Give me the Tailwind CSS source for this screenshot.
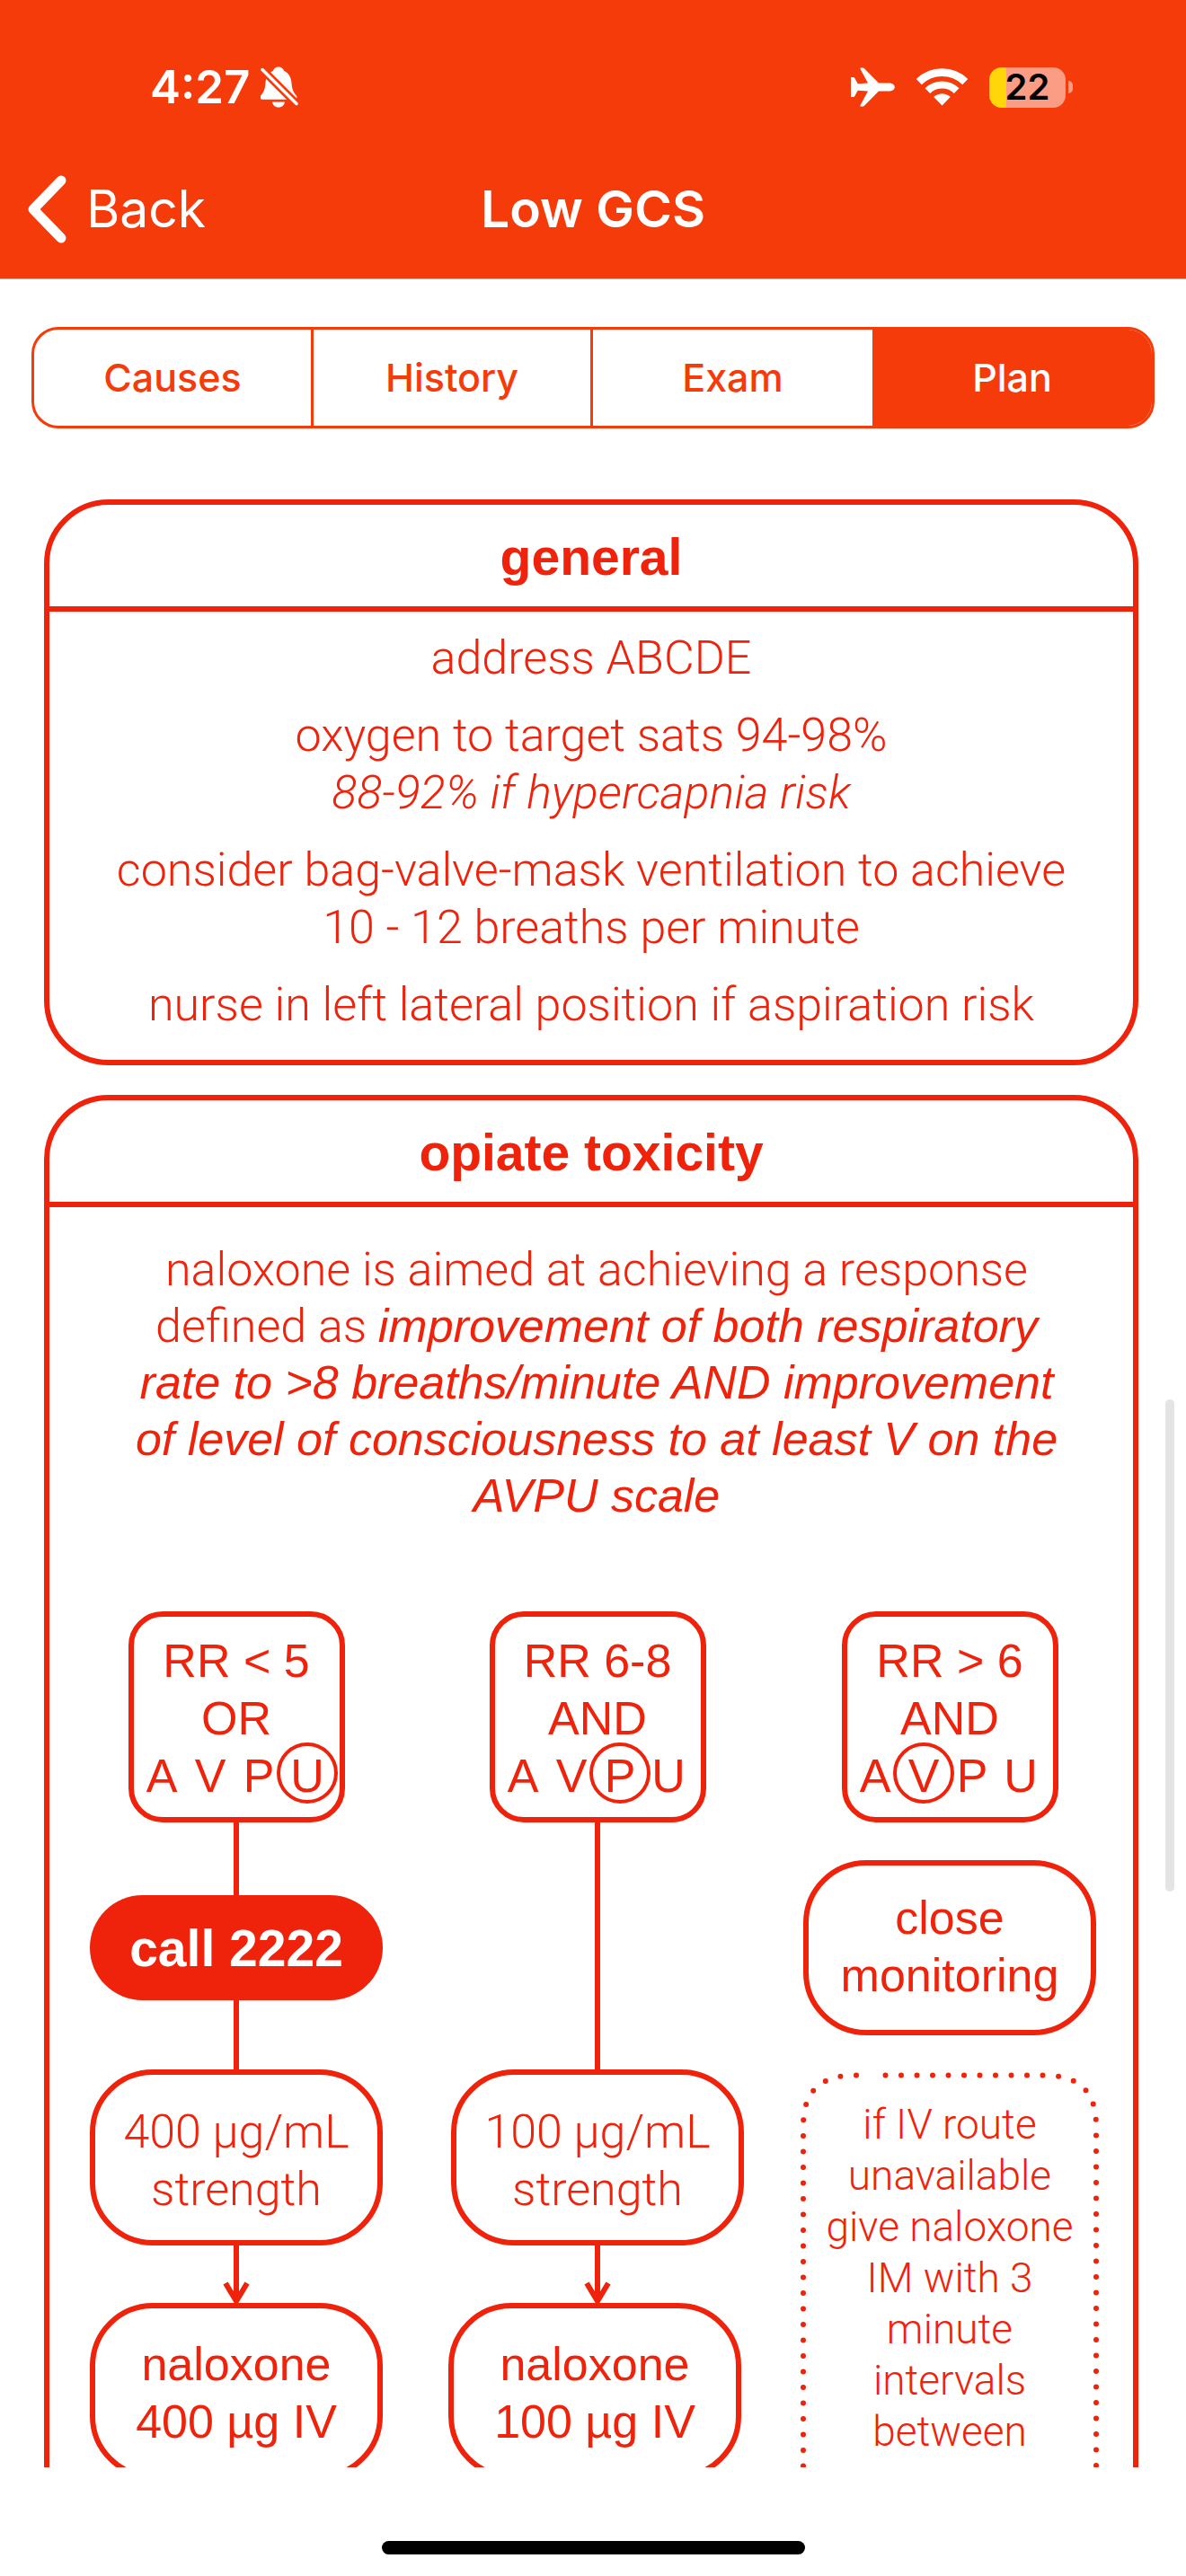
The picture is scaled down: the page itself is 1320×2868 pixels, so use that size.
<!DOCTYPE html>
<html lang="en">
<head>
<meta charset="utf-8">
<meta name="viewport" content="width=device-width, initial-scale=1">
<title>Low GCS</title>
<script src="https://cdn.jsdelivr.net/npm/@tailwindcss/browser@4"></script>
</head>
<body class="flex h-screen flex-col overflow-hidden bg-white font-['Inter',sans-serif]">

  <header class="shrink-0 border-b border-[#c9a9a0] bg-[#f63b0b] text-white">
    <!-- Status bar -->
    <div class="flex items-center justify-between pt-[66px] pb-7 pr-[126px] pl-[167px]">
      <div class="flex h-[62px] items-center gap-3">
        <span class="text-[51px] font-semibold">4:27</span>
        <svg class="h-[46px] w-[42px]" viewBox="0 0 42 46" aria-label="Silent mode">
          <path fill="#fff" d="M20 .5c3 0 5.300 1.800 6 4.200 5 2.200 8 7 8.500 13.800.5 7 2 10 5 13.500 1.800 2.200.8 4.700-1.500 4.700H2c-2.300 0-3.200-2.500-1.500-4.700 3-3.500 4.500-6.500 5-13.500.5-6.800 3.500-11.600 8.500-13.800.7-2.400 3-4.200 6-4.200z"/>
          <path fill="#fff" d="M13 39.500h14c-.5 3.700-3.400 6-7 6s-6.500-2.300-7-6z"/>
          <path stroke="#f63b0b" stroke-width="9" d="M-1 .5 43 44.500"/>
          <path stroke="#fff" stroke-width="3.500" stroke-linecap="round" d="M2 3.500 40 41.500"/>
        </svg>
      </div>
      <div class="flex h-[62px] items-center gap-6">
        <svg class="h-11 w-[49px]" viewBox="0 0 49 44" fill="#fff" aria-label="Airplane mode">
          <path d="M0 11h2.800q1 0 1.500 1l3.400 6.300 11.300-.8L10.500 1.800Q10 .5 11.400.5h1.800q1.200 0 2 1L31 17.500h11.500c4 0 6.300 2.200 6.300 4.500s-2.300 4.500-6.300 4.500H31L15.200 42.500q-.8 1-2 1h-1.800q-1.400 0-.9-1.300L19 26.500l-11.300-.8L4.300 32q-.5 1-1.500 1H0z"/>
        </svg>
        <svg class="h-[42px] w-[57px]" viewBox="0 0 57 42" fill="none" stroke="#fff" aria-label="Wi-Fi">
          <path stroke-width="8.700" d="M2.800 15.100A37 37 0 0 1 54.200 15.100"/>
          <path stroke-width="8" d="M12.400 25.100A23 23 0 0 1 44.600 25.100"/>
          <path fill="#fff" stroke="none" d="M28.500 41.500 19.800 32.600Q19 31.600 20 31 28.500 25.500 37 31 38 31.600 37.200 32.600z"/>
        </svg>
        <div class="flex items-center gap-[3px]" aria-label="Battery 22 percent">
          <div class="flex h-[45px] w-[85px] items-center justify-center rounded-[14px] bg-linear-to-r from-[#ffd60a] from-[19px] to-[#fb9d85] to-[19px]">
            <span class="text-[40px] leading-none font-semibold text-black">22</span>
          </div>
          <div class="h-[14px] w-[5px] rounded-r-full bg-[#fb9d85]"></div>
        </div>
      </div>
    </div>
    <!-- Navigation bar -->
    <div class="grid h-[154px] grid-cols-[1fr_auto_1fr] items-center">
      <button class="flex items-center gap-[22px] justify-self-start pl-[31px] text-[57px]">
        <svg class="h-[76px] w-[43px]" viewBox="0 0 43 76" fill="none" stroke="#fff" stroke-width="11" stroke-linecap="round" stroke-linejoin="round" aria-hidden="true"><path d="M37 6 6 38l31 32"/></svg>
        Back
      </button>
      <h1 class="text-[57px] font-semibold">Low GCS</h1>
    </div>
  </header>

  <main class="relative min-h-0 flex-1 overflow-hidden pt-[53px] text-[#ef230c]">
    <div class="px-[35px]">
      <div role="tablist" class="grid h-[113px] grid-cols-4 overflow-hidden rounded-[30px] border-3 border-[#f63b0b] text-[43px] font-medium text-[#f63b0b]">
        <button role="tab" class="border-r-3 border-[#f63b0b]">Causes</button>
        <button role="tab" class="border-r-3 border-[#f63b0b]">History</button>
        <button role="tab">Exam</button>
        <button role="tab" aria-selected="true" class="bg-[#f63b0b] text-white">Plan</button>
      </div>
    </div>

    <div class="flex flex-col gap-[33px] pt-[79px] pr-[53px] pl-[49px] text-center text-[52px] leading-[64px]">
      <section class="rounded-[72px] border-6 border-[#ef230c]">
        <h2 class="flex h-[119px] items-center justify-center border-b-6 border-[#ef230c] pt-0.5 font-['Liberation_Sans',sans-serif] text-[57px] font-bold">general</h2>
        <div class="flex flex-col gap-[22px] pt-5 pb-[29px] font-['Roboto',sans-serif] font-light">
          <p>address ABCDE</p>
          <p>oxygen to target sats 94-98%<br><em>88-92% if hypercapnia risk</em></p>
          <p>consider bag-valve-mask ventilation to achieve<br>10 - 12 breaths per minute</p>
          <p>nurse in left lateral position if aspiration risk</p>
        </div>
      </section>

      <section class="rounded-[72px] border-6 border-[#ef230c] pb-24 font-['Liberation_Sans',sans-serif]">
        <h2 class="flex h-[119px] items-center justify-center border-b-6 border-[#ef230c] pt-0.5 text-[57px] font-bold">opiate toxicity</h2>
        <p class="pt-[38px] pl-3 leading-[63px]"><span class="font-['Roboto',sans-serif] font-light">naloxone is aimed at achieving a response<br>defined as </span><em>improvement of both respiratory<br>rate to &gt;8 breaths/minute AND improvement<br>of level of consciousness to at least V on the<br>AVPU scale</em></p>

        <div class="grid grid-cols-[101fr_100fr_96fr] items-start pt-[97px] pr-3 pl-1.5">
          <!-- RR below 5 -->
          <div class="flex flex-col items-center">
            <div class="w-[241px] rounded-[38px] border-6 border-[#ef230c] pt-[17px] pb-[14px]">
              <p>RR &lt; 5<br>OR</p>
              <p class="-mr-1 -ml-2 flex justify-center">
                <span class="w-[54px]">A</span><span class="w-[54px]">V</span><span class="w-[54px]">P</span><span class="relative w-[54px]">U<i class="absolute -inset-x-[7px] -top-[5px] h-[68px] rounded-full border-4 border-[#ef230c]"></i></span>
              </p>
            </div>
            <div class="h-[81px] w-1.5 bg-[#ef230c]"></div>
            <div class="flex h-[117px] w-[326px] items-center justify-center rounded-full bg-[#ef230c] text-[57px] font-bold text-white">call 2222</div>
            <div class="h-[77px] w-1.5 bg-[#ef230c]"></div>
            <p class="h-[196px] w-[326px] rounded-[70px] border-6 border-[#ef230c] pt-[32px] font-['Roboto',sans-serif] font-light">400 µg/mL<br>strength</p>
            <svg class="h-16 w-8" viewBox="0 0 32 64" fill="none" stroke="#ef230c" stroke-width="6" aria-hidden="true"><path d="M16 0v60M4 42l12 20 12-20"/></svg>
            <p class="h-[196px] w-[326px] rounded-[70px] border-6 border-[#ef230c] pt-[30px]">naloxone<br>400 µg IV</p>
          </div>

          <!-- RR 6 to 8 -->
          <div class="flex flex-col items-center">
            <div class="w-[241px] rounded-[38px] border-6 border-[#ef230c] pt-[17px] pb-[14px]">
              <p>RR 6-8<br>AND</p>
              <p class="-mr-1 -ml-2 flex justify-center">
                <span class="w-[54px]">A</span><span class="w-[54px]">V</span><span class="relative w-[54px]">P<i class="absolute -inset-x-[7px] -top-[5px] h-[68px] rounded-full border-4 border-[#ef230c]"></i></span><span class="w-[54px]">U</span>
              </p>
            </div>
            <div class="h-[275px] w-1.5 bg-[#ef230c]"></div>
            <p class="h-[196px] w-[326px] rounded-[70px] border-6 border-[#ef230c] pt-[32px] font-['Roboto',sans-serif] font-light">100 µg/mL<br>strength</p>
            <svg class="h-16 w-8" viewBox="0 0 32 64" fill="none" stroke="#ef230c" stroke-width="6" aria-hidden="true"><path d="M16 0v60M4 42l12 20 12-20"/></svg>
            <p class="mr-1.5 h-[196px] w-[326px] rounded-[70px] border-6 border-[#ef230c] pt-[30px]">naloxone<br>100 µg IV</p>
          </div>

          <!-- RR above 6 -->
          <div class="flex flex-col items-center">
            <div class="w-[241px] rounded-[38px] border-6 border-[#ef230c] pt-[17px] pb-[14px]">
              <p>RR &gt; 6<br>AND</p>
              <p class="-mr-1 -ml-2 flex justify-center">
                <span class="w-[54px]">A</span><span class="relative w-[54px]">V<i class="absolute -inset-x-[7px] -top-[5px] h-[68px] rounded-full border-4 border-[#ef230c]"></i></span><span class="w-[54px]">P</span><span class="w-[54px]">U</span>
              </p>
            </div>
            <p class="mt-[42px] h-[195px] w-[326px] rounded-[70px] border-6 border-[#ef230c] pt-[26px]">close<br>monitoring</p>
            <div class="relative mt-[41px] h-[480px] w-[332px] overflow-hidden">
              <svg class="absolute inset-0 h-[600px] w-[332px]" viewBox="0 0 332 600" fill="none" stroke="#ef230c" stroke-width="6" stroke-linecap="round" stroke-dasharray="0 17.500" aria-hidden="true">
                <path d="M94.500 3.500H270C309 3.500 329 20 329 60V600"/>
                <path d="M62 3.500C23 3.500 3 20 3 60V600"/>
              </svg>
              <p class="pt-[30px] font-['Roboto',sans-serif] text-[46px] leading-[57px] font-light">if IV route<br>unavailable<br>give naloxone<br>IM with 3<br>minute<br>intervals<br>between</p>
            </div>
          </div>
        </div>
      </section>
    </div>

    <!-- Scroll position indicator -->
    <div class="absolute top-[51.200%] right-[13px] h-[22.500%] w-2.5 rounded-full bg-[#e4e4e4]" aria-hidden="true"></div>
  </main>

  <footer class="flex h-[121px] shrink-0 justify-center bg-white pt-[82px]">
    <div class="h-[15px] w-[471px] rounded-full bg-black"></div>
  </footer>
</body>
</html>
